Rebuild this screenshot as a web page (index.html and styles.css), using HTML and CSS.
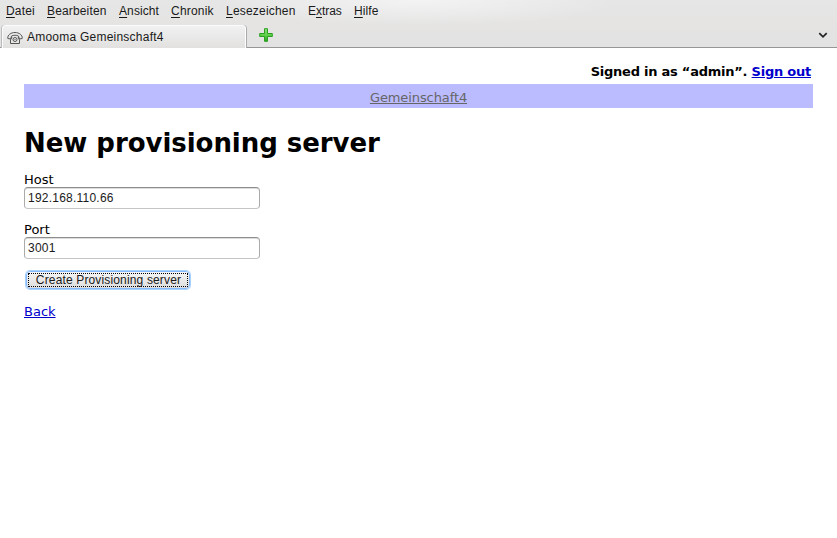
FILE: index.html
```
<!DOCTYPE html>
<html lang="de">
<head>
<meta charset="utf-8">
<title>Amooma Gemeinschaft4</title>
<link rel="stylesheet" href="styles.css">
</head>
<body>
<header class="chrome">
  <nav class="menu">
    <span class="m1"><u>D</u>atei</span>
    <span class="m2"><u>B</u>earbeiten</span>
    <span class="m3"><u>A</u>nsicht</span>
    <span class="m4"><u>C</u>hronik</span>
    <span class="m5"><u>L</u>esezeichen</span>
    <span class="m6">E<u>x</u>tras</span>
    <span class="m7"><u>H</u>ilfe</span>
  </nav>
  <div class="tabs">
    <div class="tab">
      <svg class="phone" width="16" height="14" viewBox="0 0 16 14" fill="none" stroke="#555" stroke-width="1">
        <path d="M.8 7.500 C.3 4 4 1.500 8 1.500 S15.700 4 15.200 7.500 L12.300 8 11.500 5 C9.500 4 6.500 4 4.500 5 L3.700 8 Z"/>
        <path d="M5 6 L3.500 9 V12.500 H12.500 V9 L11 6"/>
        <circle cx="8" cy="8.500" r="2"/>
        <path d="M7.500 8.500 H8.500"/>
      </svg>
      <span>Amooma Gemeinschaft4</span>
    </div>
    <svg class="plus" width="14" height="14" viewBox="0 0 14 14">
      <defs><linearGradient id="green" x1="0" y1="0" x2="0" y2="1"><stop offset="0" stop-color="#8fe07a"/><stop offset=".5" stop-color="#5fd04a"/><stop offset="1" stop-color="#25a51c"/></linearGradient></defs>
      <path d="M5.500 .7 H8.500 V5.500 H13.300 V8.500 H8.500 V13.300 H5.500 V8.500 H.7 V5.500 H5.500 Z" fill="url(#green)" stroke="#2a9f22" stroke-linejoin="round"/>
    </svg>
    <svg class="chevron" width="10" height="7" viewBox="0 0 10 7"><path d="M1.300 1.200 L5 4.900 8.700 1.200" fill="none" stroke="#222" stroke-width="1.700"/></svg>
  </div>
</header>
<main class="page">
  <div class="account">Signed in as “admin”. <a href="#">Sign out</a></div>
  <div class="banner"><a href="#">Gemeinschaft4</a></div>
  <h1>New provisioning server</h1>
  <form>
    <div class="field"><label for="host">Host</label><input id="host" type="text" value="192.168.110.66"></div>
    <div class="field"><label for="port">Port</label><input id="port" type="text" value="3001"></div>
    <button class="submit" type="button"><span>Create Provisioning server</span></button>
  </form>
  <a class="back" href="#">Back</a>
</main>
</body>
</html>
```
FILE: styles.css
```
* { box-sizing: border-box; }
body { margin: 0; background: #fff; color: #000; font: 13px/18px "DejaVu Sans", sans-serif; }
a { color: #0000cc; }
.chrome { height: 48px; background: radial-gradient(ellipse 200px 26px at 418px 0, #f3f3f3, #f3f3f300), linear-gradient(#e6e6e6, #e5e4e3 50%, #e2e2e2); border-bottom: 1px solid #979596; color: #1a1a1a; font: 12px/14px "Liberation Sans", sans-serif; }
.menu { display: flex; height: 25px; padding: 4px 0 0 6px; }
.menu span { white-space: nowrap; flex: none; }
.menu u { text-underline-offset: 2px; text-decoration-thickness: 1px; }
.m1 { width: 41px; letter-spacing: .15px; }
.m2 { width: 72px; letter-spacing: .15px; }
.m3 { width: 52px; letter-spacing: .1px; }
.m4 { width: 55px; letter-spacing: .2px; }
.m5 { width: 82px; letter-spacing: .2px; }
.m6 { width: 46px; letter-spacing: -.05px; }
.m7 { letter-spacing: .1px; }
.tabs { display: flex; height: 22px; padding-left: 2px; }
.tab { display: flex; align-items: center; gap: 4px; width: 244px; height: 23px; padding: 0 0 1px 4px; border: 1px solid #fbfbfb; border-right-color: #fff; border-bottom: 0; border-radius: 4px 4px 0 0; background: linear-gradient(#f1f1f1, #e2e1e0); box-shadow: 1px 0 0 #aaa, -1px 0 0 #bbb; letter-spacing: .23px; }
.phone { position: relative; top: 1px; }
.plus { margin: 3px 0 0 13px; }
.chevron { margin: 7px 9px 0 auto; }
.page { padding: 15px 24px 0; }
.account { height: 21px; padding-right: 2px; text-align: right; font-weight: bold; letter-spacing: -.24px; }
.banner { height: 24px; padding-top: 5px; background: #bbbbff; text-align: center; letter-spacing: -.1px; }
.banner a { color: #666; }
h1 { margin: 19px 0 0; font-size: 26px; line-height: 32px; font-weight: bold; letter-spacing: -.04px; }
.field { height: 50px; }
form { padding-top: 12px; }
label { display: block; height: 16px; line-height: 18px; }
input { display: block; width: 236px; height: 22px; padding: 0 3px 1px; border: 1px solid #aaa; border-top-color: #8e8e8e; border-bottom-color: #c5c5c5; border-radius: 4px; outline: 0; background: #fff; box-shadow: inset 0 1px 0 #ddd; color: #1a1a1a; font: 12px/18px "Liberation Sans", sans-serif; letter-spacing: .23px; }
.submit { display: block; width: 164px; height: 18px; margin: 0 0 0 2px; padding: 0; border: 1px solid #84bafa; border-radius: 4px; background: linear-gradient(#f5f5f5, #dedede); box-shadow: 0 0 0 1px #a9d1ff; color: #1a1a1a; font: 12px/14px "Liberation Sans", sans-serif; letter-spacing: .15px; }
.submit span { display: block; width: 162px; height: 16px; padding-left: 1px; line-height: 16px; outline: 1px dotted #000; outline-offset: -2px; white-space: nowrap; }
.back { display: inline-block; margin-top: 14px; }
```
